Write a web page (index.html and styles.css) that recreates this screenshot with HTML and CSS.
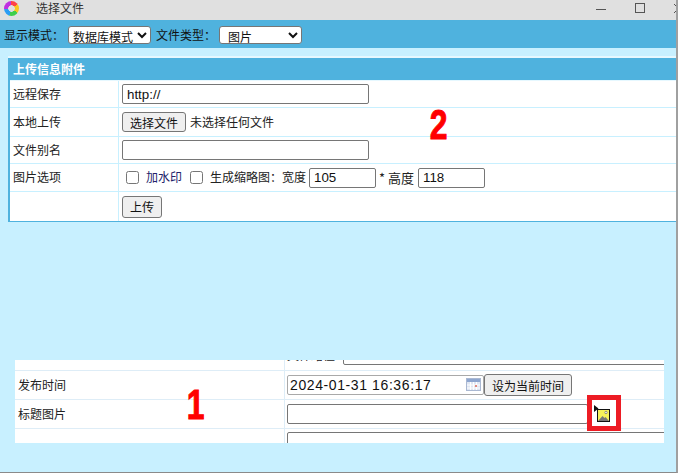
FILE: index.html
```html
<!DOCTYPE html>
<html lang="zh">
<head>
<meta charset="utf-8">
<title>选择文件</title>
<link rel="stylesheet" href="styles.css">
</head>
<body>
<div class="window">
  <header class="titlebar">
    <span class="logo"></span>
    <span class="title">选择文件</span>
    <span class="controls">
      <svg class="ctl" width="12" height="12" viewBox="0 0 12 12"><path d="M0 6.500h10" stroke="#555" fill="none"/></svg>
      <svg class="ctl ctl-max" width="12" height="12" viewBox="0 0 12 12"><rect x=".5" y=".5" width="9" height="9" stroke="#555" fill="none"/></svg>
      <svg class="ctl ctl-close" width="12" height="12" viewBox="0 0 12 12"><path d="M1 1l9 9M10 1l-9 9" stroke="#555" fill="none"/></svg>
    </span>
  </header>
  <div class="toolbar">
    <label class="tool-label">显示模式：</label>
    <select class="sel sel-mode"><option>数据库模式</option></select>
    <label class="tool-label">文件类型：</label>
    <select class="sel sel-type"><option>图片</option></select>
  </div>
  <section class="panel">
    <h2 class="panel-head">上传信息附件</h2>
    <div class="row r1">
      <div class="key">远程保存</div>
      <div class="val"><input class="inp wide" value="http://"></div>
    </div>
    <div class="row r2">
      <div class="key">本地上传</div>
      <div class="val"><button class="btn btn-file">选择文件</button><span class="nofile">未选择任何文件</span></div>
    </div>
    <div class="row r3">
      <div class="key">文件别名</div>
      <div class="val"><input class="inp wide"></div>
    </div>
    <div class="row r4">
      <div class="key">图片选项</div>
      <div class="val opts">
        <input class="chk" type="checkbox"><span class="opt-a">加水印</span>
        <input class="chk" type="checkbox"><span class="opt-b">生成缩略图：宽度</span>
        <input class="inp num" value="105"><span class="opt-c">* 高度</span>
        <input class="inp num" value="118">
      </div>
    </div>
    <div class="row r5">
      <div class="key"></div>
      <div class="val"><button class="btn btn-up">上传</button></div>
    </div>
  </section>
  <section class="form">
    <div class="frow f0">
      <div class="fkey"></div>
      <div class="fval"><span class="cut">文件路径</span><input class="inp cutinp"></div>
    </div>
    <div class="frow f1">
      <div class="fkey">发布时间</div>
      <div class="fval">
        <span class="datebox"><input class="inp date" value="2024-01-31 16:36:17">
          <svg class="cal" width="15" height="13" viewBox="0 0 15 13"><rect x=".5" y=".5" width="14" height="12" fill="#dfe6f2" stroke="#aab8d2"/><rect x="1" y="1" width="13" height="3" fill="#8ea6cf"/><path d="M1 7h13M1 10h13M4.500 4v8M7.500 4v8M10.500 4v8" stroke="#fff"/><rect x="9" y="7" width="2" height="2" fill="#e08a80"/></svg>
        </span><button class="btn btn-now">设为当前时间</button>
      </div>
    </div>
    <div class="frow f2">
      <div class="fkey">标题图片</div>
      <div class="fval"><input class="inp pic"></div>
    </div>
    <div class="frow f3">
      <div class="fkey"></div>
      <div class="fval"><input class="inp last"></div>
    </div>
  </section>
  <span class="mark m2">2</span>
  <span class="mark m1">1</span>
  <div class="redbox">
    <svg width="18" height="18" viewBox="0 0 18 18" class="picicon">
      <path d="M1 0l4.500 3.500L1 7z" fill="#111"/>
      <rect x="4.500" y="4.500" width="12" height="12" fill="#f7f25a" stroke="#111"/>
      <path d="M5 16l4.500-5 2 2 1-1 3.500 4z" fill="#777"/>
      <circle cx="13" cy="7.500" r="1.200" fill="#fff" stroke="#555" stroke-width=".6"/>
    </svg>
  </div>
</div>
</body>
</html>
```
FILE: styles.css
```css
* { box-sizing: border-box; }
html, body { margin: 0; padding: 0; height: 100%; overflow: hidden; background: #c8f0ff; }
body { font: 12px/1.2 "Noto Sans CJK SC", "Liberation Sans", sans-serif; color: #222; }

.window { position: relative; width: 678px; height: 473px; background: #c8f0ff;
  border-right: 2px solid #a0a0a0; border-bottom: 1px solid #8a8a8a; overflow: hidden; }

.titlebar { height: 20px; background: #e0e0e0; display: flex; align-items: center; padding: 0 0 3px 4px; }
.logo { width: 15px; height: 15px; border-radius: 50%;
  background: radial-gradient(circle, #e0e0e0 0 3px, transparent 3.500px), conic-gradient(#f44 0 15%, #f7c820 15% 35%, #3ecf4a 35% 55%, #2a9df4 55% 75%, #c030e0 75% 100%); }
.title { margin-left: 17px; font-size: 12px; color: #333; }
.controls { margin-left: auto; display: flex; align-items: center; margin-right: -9px; }
.ctl { display: block; }
.ctl-max { margin-left: 27px; }
.ctl-close { margin-left: 26px; }

.toolbar { height: 28px; background: #4fb2de; display: flex; align-items: center; padding: 2px 0 0 4px; color: #111; }
.tool-label { font-size: 12px; }
.sel { height: 18px; font: 12px "Noto Sans CJK SC", sans-serif; background: #fff; border: 1px solid #767676; border-radius: 3px; padding: 0; color: #111; }
.sel-mode { width: 83px; margin: 0 5px 0 4px; }
.sel-type { width: 83px; margin-left: 3px; padding-left: 4px; }

.panel { margin: 10px 0 0 8px; width: 668px; background: #fff; border: 2px solid #4fb2de; border-width: 0 0 1px 2px; box-shadow: 0 -2px 0 0 #e6f8ff; }
.panel-head { margin: 0; height: 23px; padding-left: 3px; background: #4fb2de; color: #fff; font-size: 12px; font-weight: 700; line-height: 21px; border-bottom: 1px solid #e6f8ff; }
.row { display: grid; grid-template-columns: 109px 1fr; border-bottom: 1px solid #c8f0ff; }
.r1 { height: 27px; } .r2 { height: 29px; } .r3 { height: 27px; } .r4 { height: 28px; } .r5 { height: 29px; border-bottom: 0; }
.key { padding-left: 3px; display: flex; align-items: center; border-right: 1px solid #c8f0ff; font-size: 12px; }
.val { display: flex; align-items: center; padding-left: 3px; }

.inp { height: 20px; border: 1px solid #767676; border-radius: 2px; background: #fff; padding: 0 4px; font: 13.33px "Liberation Sans", sans-serif; color: #111; outline: 0; flex: none; }
.wide { width: 247px; }
.num { width: 67px; }
.btn { font: 12px "Noto Sans CJK SC", sans-serif; background: #efefef; border: 1px solid #767676; border-radius: 3px; padding: 0; color: #111; }
.btn-file { width: 64px; height: 20px; }
.nofile { margin-left: 4px; }
.btn-up { width: 40px; height: 22px; }
.chk { appearance: none; width: 13px; height: 13px; margin: 0; border: 1px solid #767676; border-radius: 2.500px; background: #fff; }
.opts .chk:first-child { margin-left: 4px; }
.opt-a { margin-left: 7px; width: 38px; color: #22226a; }
.opts .opt-a + .chk { margin-left: 6px; }
.opt-b { margin-left: 7px; margin-right: 3px; }
.opt-c { margin: 0 4px 0 3px; font-size: 13px; }

.form { margin: 138px 0 0 15px; width: 649px; height: 83px; background: #fff; overflow: hidden; }
.frow { display: grid; grid-template-columns: 270px 1fr; border-bottom: 1px solid #deedf7; }
.f0 { height: 11px; }
.f1, .f2 { height: 29px; }
.f3 { height: 15px; border-bottom: 0; }
.fkey { padding-left: 3px; display: flex; align-items: center; border-right: 1px solid #deedf7; font-size: 12px; }
.fval { position: relative; display: flex; align-items: center; padding-left: 2px; overflow: hidden; }
.f0 .fval { align-items: flex-start; }
.cut { font-size: 12px; line-height: 14px; height: 14px; margin-top: -12px; white-space: nowrap; flex: none; }
.cutinp { position: absolute; left: 58px; top: -20px; width: 340px; height: 25px; }
.datebox { position: relative; display: block; height: 20px; flex: none; }
.date { width: 197px; border-color: #a9a9a9; padding: 0 2px; font-size: 14px; letter-spacing: .6px; display: block; }
.cal { position: absolute; right: 3px; top: 3px; }
.btn-now { width: 88px; height: 22px; flex: none; }
.pic { width: 301px; }
.f3 .fval { align-items: flex-start; padding-top: 3px; }
.last { width: 400px; height: 20px; }

.mark { position: absolute; color: #f00; font: 700 42px/1 "Liberation Sans", sans-serif; -webkit-text-stroke: 1px #f00; transform: scaleX(.76); }
.m2 { left: 427px; top: 104px; }
.m1 { left: 184px; top: 384px; }

.redbox { position: absolute; left: 587px; top: 395px; width: 34px; height: 36px; border: 5px solid #ed1c24; background: #fff; }
.picicon { position: absolute; left: 1px; top: 5px; }
```
